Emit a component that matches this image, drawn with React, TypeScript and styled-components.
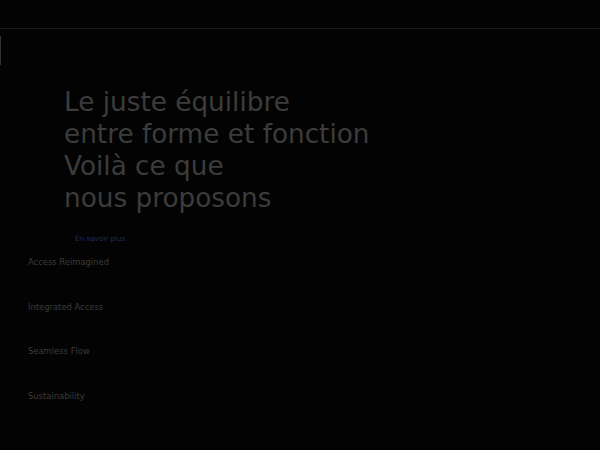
import React, { FC } from 'react'
import styled, { createGlobalStyle } from 'styled-components'

const GlobalStyle = createGlobalStyle`
    html, body {
        margin: 0;
        padding: 0;
        background: #030303;
        font-family: "DejaVu Sans", "Liberation Sans", sans-serif;
    }
`

const Page = styled.div`
    width: 600px;
    height: 450px;
    overflow: hidden;
    background: #030303;
`

const Header = styled.header`
    height: 28px;
    border-bottom: 1px solid #1b1b1b;
`

const Body = styled.main`
    padding-top: 7px;
`

const SideMark = styled.div`
    width: 1px;
    height: 29px;
    background: #333333;
`

const Hero = styled.section`
    padding: 21px 0 0 64px;
`

const Title = styled.h1`
    margin: 0;
    font-size: 26.3px;
    font-weight: normal;
    line-height: 32px;
    color: #3c3c3c;
`

const MoreLink = styled.a`
    display: block;
    margin: 20px 0 0 75px;
    font-size: 7.2px;
    line-height: 10px;
    color: #1e2d68;
    text-decoration: none;
`

const Features = styled.ul`
    list-style: none;
    margin: 13px 0 0;
    padding: 0 0 0 28px;
    display: flex;
    flex-direction: column;
    gap: 34.5px;
`

const Feature = styled.li`
    font-size: 8.4px;
    line-height: 10px;
    color: #3b3b3b;
`

const features = ['Access Reimagined', 'Integrated Access', 'Seamless Flow', 'Sustainability']

const App: FC = () => (
    <Page>
        <GlobalStyle />
        <Header />
        <Body>
            <SideMark />
            <Hero>
                <Title>
                    Le juste équilibre<br />
                    entre forme et fonction<br />
                    Voilà ce que<br />
                    nous proposons
                </Title>
            </Hero>
            <MoreLink href="#">En savoir plus</MoreLink>
            <Features>
                {features.map(f => (
                    <Feature key={f}>{f}</Feature>
                ))}
            </Features>
        </Body>
    </Page>
)

export default App
